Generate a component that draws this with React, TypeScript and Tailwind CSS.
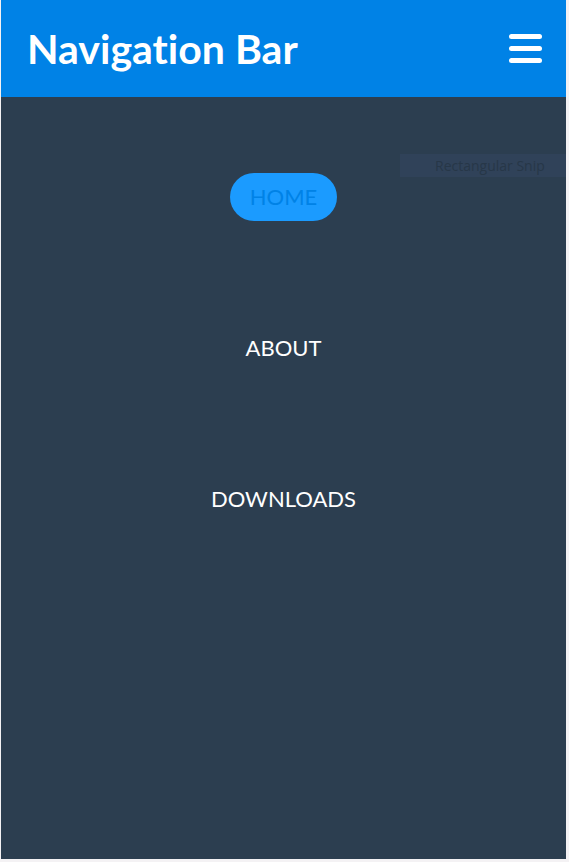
export default function App() {
  const links = ['HOME', 'ABOUT', 'DOWNLOADS'];

  return (
    <div className="min-h-screen bg-[#f4f2f4] pl-px pr-[3px] pb-[3px] [font-variant-ligatures:none]" style={{ fontFamily: 'Lato, "Open Sans", sans-serif' }}>
      <div className="relative flex h-[859px] flex-col">
        {/* Header */}
        <nav className="flex h-[97px] shrink-0 items-center justify-between bg-[#0082e6] pl-[26px] pr-[24px]">
          <span className="text-[41px] font-bold leading-none text-white">Navigation Bar</span>
          <button className="flex flex-col gap-[7px]" aria-label="menu">
            <span className="block h-[5px] w-[33px] rounded-full bg-white" />
            <span className="block h-[5px] w-[33px] rounded-full bg-white" />
            <span className="block h-[5px] w-[33px] rounded-full bg-white" />
          </button>
        </nav>

        {/* Mobile menu */}
        <ul className="flex flex-1 flex-col items-center gap-[103px] bg-[#2c3e50] pt-[76px]">
          {links.map((l, i) => (
            <li key={l} className="flex h-12 items-center">
              {i === 0 ? (
                <a href="#" className="rounded-full bg-[#1b9bff] px-5 py-[9px] text-[22px] leading-[30px] text-[#0082e6]">
                  {l}
                </a>
              ) : (
                <a href="#" className="text-[22px] leading-[30px] text-white">
                  {l}
                </a>
              )}
            </li>
          ))}
        </ul>

        {/* snip tooltip */}
        <div className="absolute left-[399px] top-[154px] flex h-[23px] w-[166px] items-center bg-[#304259] pl-[35px] text-[14px] text-[#273748]" style={{ fontFamily: '"Open Sans", sans-serif' }}>
          Rectangular Snip
        </div>
      </div>
    </div>
  );
}
